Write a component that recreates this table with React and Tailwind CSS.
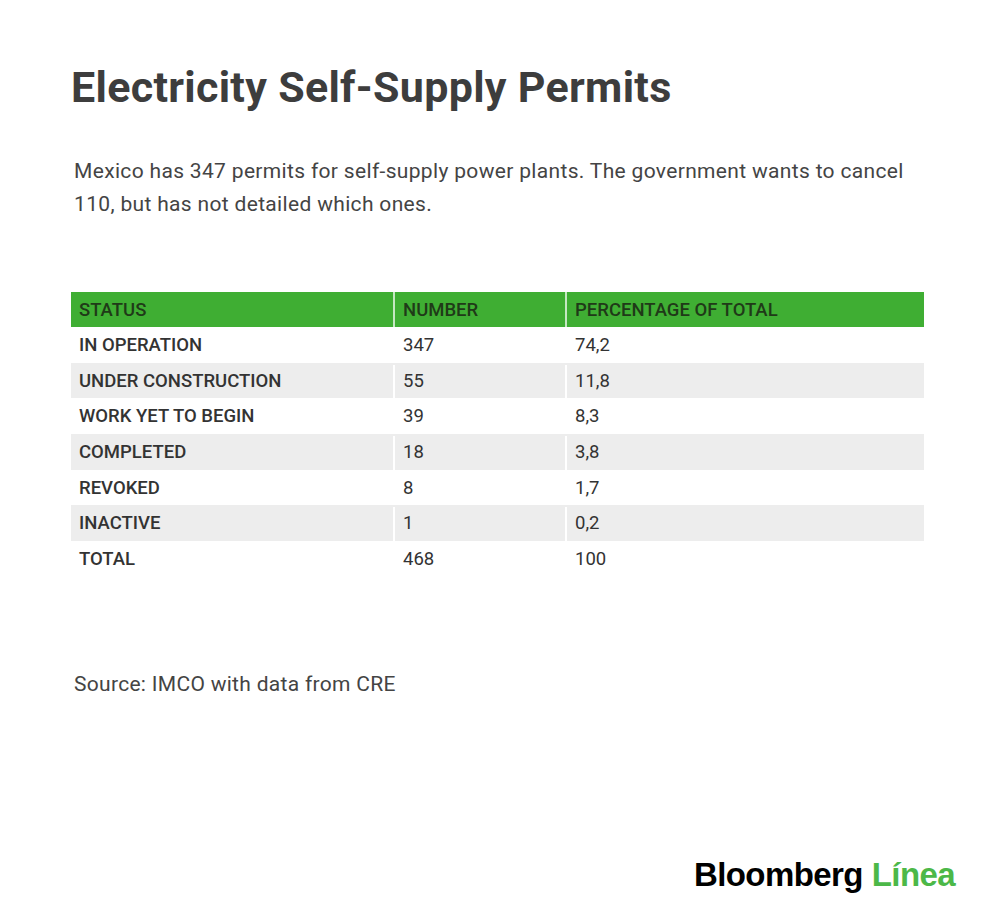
const rows = [
  ["IN OPERATION", "347", "74,2"],
  ["UNDER CONSTRUCTION", "55", "11,8"],
  ["WORK YET TO BEGIN", "39", "8,3"],
  ["COMPLETED", "18", "3,8"],
  ["REVOKED", "8", "1,7"],
  ["INACTIVE", "1", "0,2"],
  ["TOTAL", "468", "100"],
];

export default function App() {
  return (
    <div className="w-[1000px] h-[918px] bg-white flex flex-col font-['Roboto',sans-serif] text-[#444]">
      <h1 className="ml-[71px] mt-[62px] text-[43px] leading-[50px] tracking-[0.3px] font-bold text-[#3d3d3d]">
        Electricity Self-Supply Permits
      </h1>

      <p className="ml-[74px] mt-[43px] w-[850px] text-[21px] leading-[33px] tracking-[0.33px] text-[#444]">
        Mexico has 347 permits for self-supply power plants. The government wants to cancel 110, but has not detailed which ones.
      </p>

      <div className="ml-[71px] mt-[71px] w-[853px] flex flex-col text-[18.5px]">
        <div className="flex h-[35px] bg-[#3fae33] text-[#1f3a18] font-medium">
          <div className="w-[324px] px-2 pt-[2px] flex items-center border-r-2 border-white/70">STATUS</div>
          <div className="w-[172px] px-2 pt-[2px] flex items-center border-r-2 border-white/70">NUMBER</div>
          <div className="flex-1 px-2 pt-[2px] flex items-center">PERCENTAGE OF TOTAL</div>
        </div>
        {rows.map(([status, num, pct], i) => (
          <div key={status} className={`flex h-[35.7px] pt-[2px] text-[#333] ${i % 2 === 1 ? "bg-[#ededed]" : "bg-white"}`}>
            <div className="w-[324px] px-2 flex items-center border-r-2 border-white font-medium">{status}</div>
            <div className="w-[172px] px-2 flex items-center border-r-2 border-white">{num}</div>
            <div className="flex-1 px-2 flex items-center">{pct}</div>
          </div>
        ))}
      </div>

      <p className="ml-[74px] mt-[92px] text-[21px] leading-[30px] tracking-[0.3px] text-[#444]">
        Source: IMCO with data from CRE
      </p>

      <div className="mt-auto mb-[19px] mr-[45px] self-end flex items-baseline font-['Liberation_Sans',sans-serif] font-bold text-[33px] tracking-[-0.6px]">
        <span className="text-black">Bloomberg</span>
        <span className="ml-[9px] text-[#4cb848]">Línea</span>
      </div>
    </div>
  );
}
